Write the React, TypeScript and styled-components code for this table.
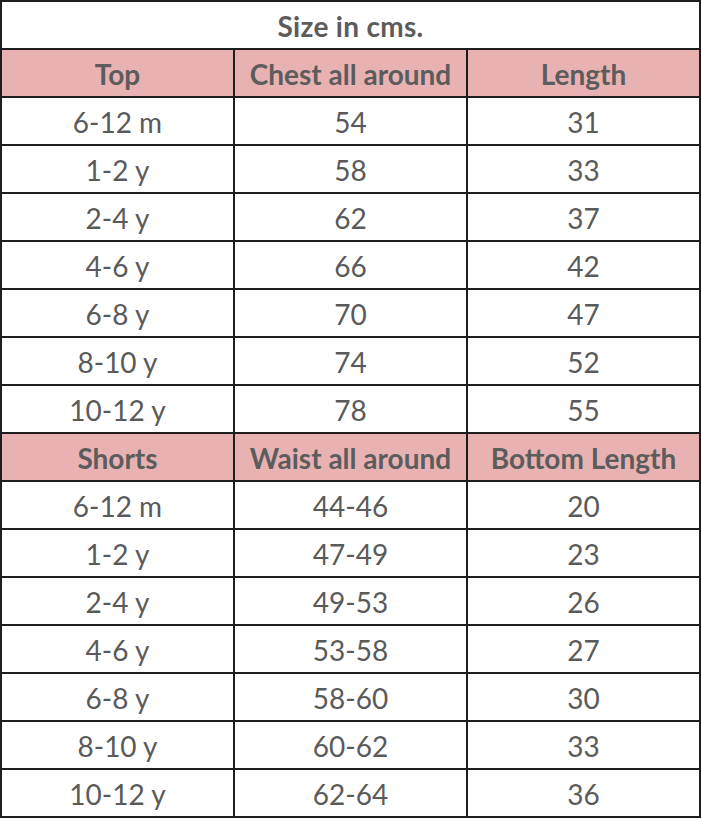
import React from "react";
import styled, { createGlobalStyle } from "styled-components";

const Global = createGlobalStyle`
  html, body { margin: 0; padding: 0; background: #ffffff; }
  body { font-family: Lato, "Open Sans", sans-serif; }
`;

const Table = styled.div`
  display: grid;
  grid-template-columns: repeat(3, 231px);
  grid-auto-rows: 46px;
  gap: 2px;
  padding: 2px;
  width: 701px;
  box-sizing: border-box;
  background: #1e1e1e;
`;

const Cell = styled.div<{ $head?: boolean; $span?: boolean; $bold?: boolean }>`
  display: flex;
  align-items: center;
  justify-content: center;
  padding-top: 2px;
  background: ${(p) => (p.$head ? "#e8b2b3" : "#ffffff")};
  color: ${(p) => (p.$head || p.$bold ? "#5c5c5c" : "#5a5a5a")};
  font-size: 28px;
  font-weight: ${(p) => (p.$head || p.$bold ? 700 : 400)};
  grid-column: ${(p) => (p.$span ? "1 / span 3" : "auto")};
  letter-spacing: ${(p) => (p.$bold ? "0.3px" : "0")};
`;

const topRows = [
  ["6-12 m", "54", "31"],
  ["1-2 y", "58", "33"],
  ["2-4 y", "62", "37"],
  ["4-6 y", "66", "42"],
  ["6-8 y", "70", "47"],
  ["8-10 y", "74", "52"],
  ["10-12 y", "78", "55"],
];

const shortRows = [
  ["6-12 m", "44-46", "20"],
  ["1-2 y", "47-49", "23"],
  ["2-4 y", "49-53", "26"],
  ["4-6 y", "53-58", "27"],
  ["6-8 y", "58-60", "30"],
  ["8-10 y", "60-62", "33"],
  ["10-12 y", "62-64", "36"],
];

const Section = ({ head, rows }: { head: string[]; rows: string[][] }) => (
  <>
    {head.map((h) => (
      <Cell key={h} $head>
        {h}
      </Cell>
    ))}
    {rows.map((r, i) =>
      r.map((c, j) => <Cell key={`${i}-${j}`}>{c}</Cell>)
    )}
  </>
);

export default function App() {
  return (
    <>
      <Global />
      <Table>
        <Cell $span $bold>Size in cms.</Cell>
        <Section head={["Top", "Chest all around", "Length"]} rows={topRows} />
        <Section head={["Shorts", "Waist all around", "Bottom Length"]} rows={shortRows} />
      </Table>
    </>
  );
}
